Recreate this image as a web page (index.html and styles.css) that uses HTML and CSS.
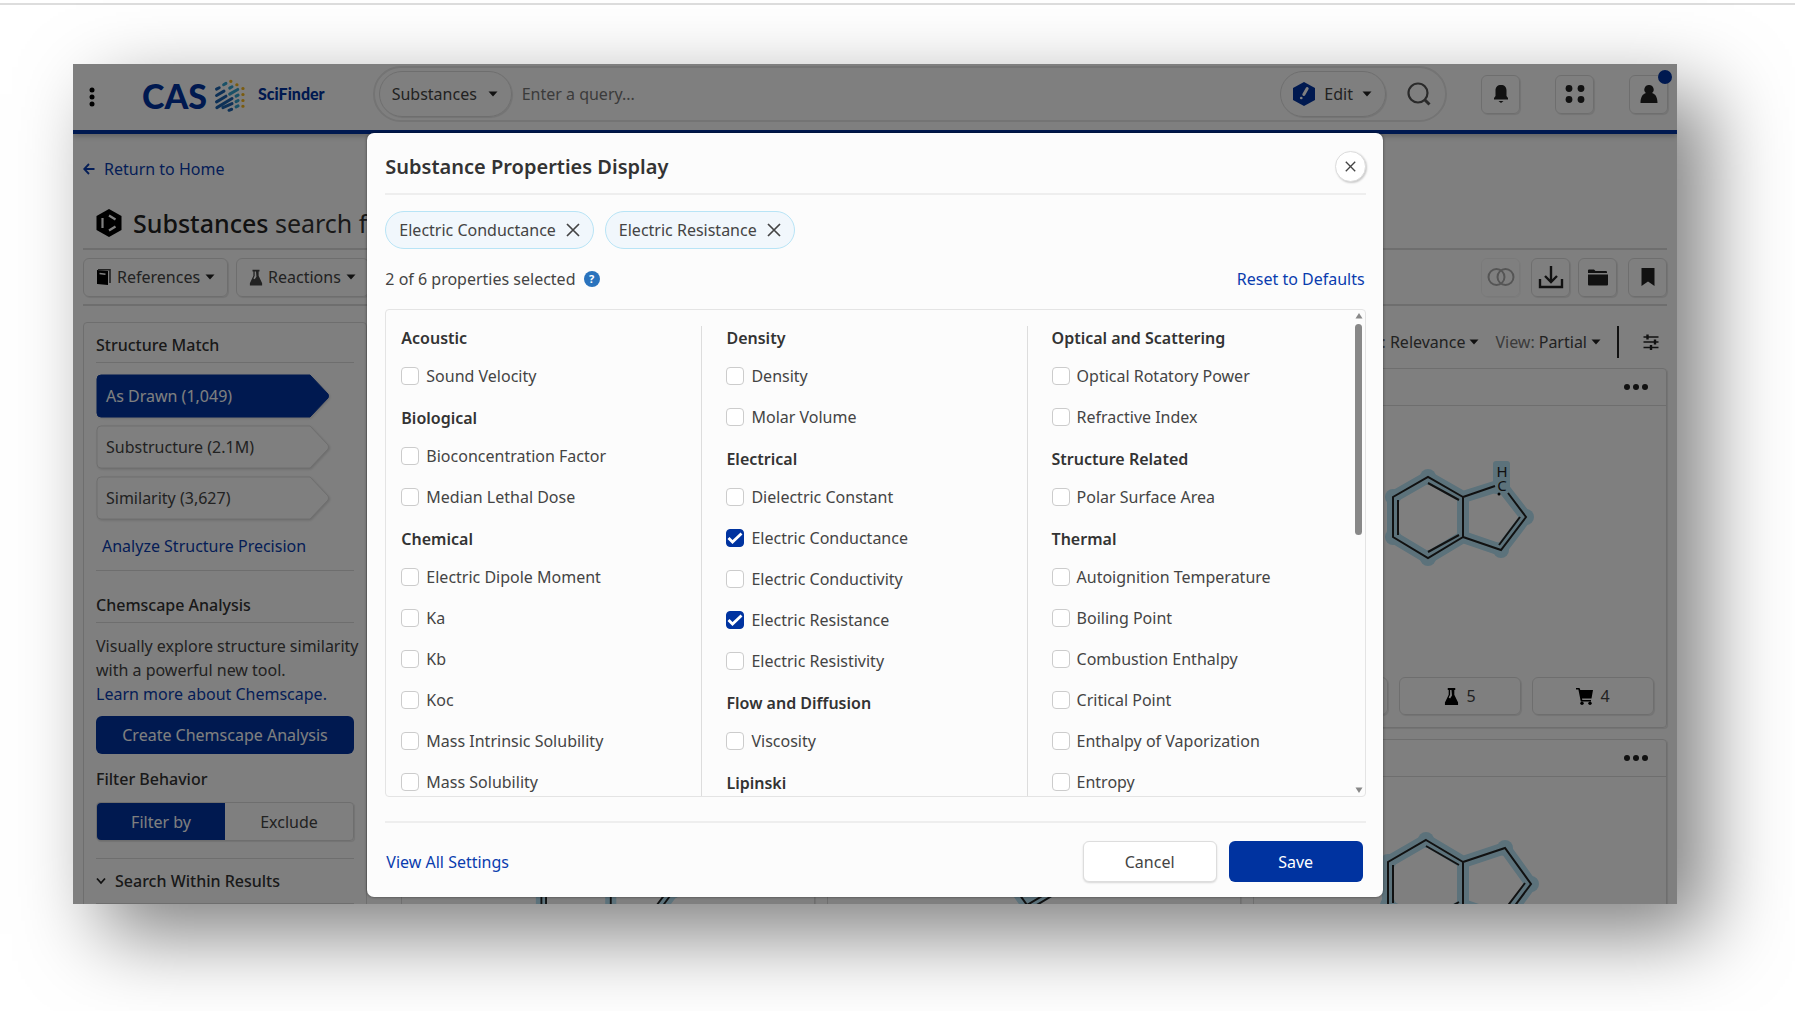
FILE: index.html
```
<!DOCTYPE html>
<html lang="en">
<head>
  <meta charset="UTF-8" />
  <title>CAS SciFinder - Substances</title>
  <link rel="stylesheet" href="styles.css">
</head>
<body>
  <!-- shared symbols -->
  <svg class="symbols" aria-hidden="true">
    <symbol id="caret" viewBox="0 0 10 6"><path d="M0.5 0.5h9L5 5.5z" fill="currentColor"/></symbol>
    <symbol id="flask" viewBox="0 0 16 18">
      <path d="M4 0h8v2h-1v5l4 8.500V18H1v-2.500L5 7V2H4z" fill="currentColor"/>
      <path d="M6.500 2h1.500l.5 6-2 3-1.500-1 1.500-3z" fill="#fff"/>
    </symbol>
    <symbol id="close" viewBox="0 0 14 14"><path d="M1 1l12 12M13 1L1 13" stroke="currentColor" stroke-width="1.700" fill="none"/></symbol>
    <symbol id="more" viewBox="0 0 26 8"><g fill="currentColor"><circle cx="4" cy="4" r="3"/><circle cx="13" cy="4" r="3"/><circle cx="22" cy="4" r="3"/></g></symbol>
    <symbol id="indene" viewBox="1379 831 160 110">
      <g class="glow"><path d="M1425 841L1462 863V906L1425 928L1387 906V863ZM1462 863L1504 849L1530 885L1504 920L1462 906"/></g>
      <g class="dots"><circle cx="1425" cy="841" r="8"/><circle cx="1425" cy="928" r="8"/><circle cx="1387" cy="863" r="8"/><circle cx="1387" cy="906" r="8"/><circle cx="1504" cy="849" r="8"/><circle cx="1530" cy="885" r="8"/></g>
      <g class="bonds"><path d="M1425 841L1462 863V906L1425 928L1387 906V863ZM1462 863L1504 849L1530 885L1504 920L1462 906M1425 847L1458 866M1392 866V904M1425 922L1458 903M1524 884L1502 913"/></g>
    </symbol>
  </svg>

  <hr class="top-rule">

  <div class="app">
    <header class="header">
      <button class="menu-btn" aria-label="Main menu">
        <svg width="8" height="20" viewBox="0 0 8 20"><circle cx="4" cy="3" r="2.500"/><circle cx="4" cy="10" r="2.500"/><circle cx="4" cy="17" r="2.500"/></svg>
      </button>
      <a class="logo" href="#">
        <span class="logo-cas">CAS</span>
        <svg width="34" height="37" viewBox="455 85 100 110" fill="none" stroke-width="9" stroke-linecap="round">
          <path stroke="#1c63ae" d="M465 121L473 117M465 140L487 127M465 159L493 142M466 176L511 149M484 176L511 164M502 184L510 181"/>
          <path stroke="#35a3cf" d="M486 108L493 104M504 118L511 114M504 136L528 122M523 142L529 139M523 158L529 155M523 174L529 171"/>
          <path stroke="#f5b71f" d="M507 98h1M525 108h1M543 119h1M543 137h1M543 155h1M543 172h1"/>
        </svg>
        <span class="logo-name">SciFinder</span>
      </a>
      <div class="search">
        <div class="search-type pill">
          <select aria-label="Search type"><option>Substances</option></select>
          <svg class="caret"><use href="#caret"/></svg>
        </div>
        <input class="query" type="text" placeholder="Enter a query..." aria-label="Query">
        <button class="pill edit-btn">
          <svg width="22" height="24" viewBox="0 0 22 24"><path d="M11 0l11 6v12l-11 6L0 18V6z" fill="#0033a0"/><path d="M14.200 6.500l-3.400 6" stroke="#fff" stroke-width="3" stroke-linecap="round"/><path d="M8.200 16h.1" stroke="#fff" stroke-width="2.600" stroke-linecap="round"/></svg>
          Edit
          <svg class="caret"><use href="#caret"/></svg>
        </button>
        <button class="search-btn" aria-label="Search">
          <svg width="24" height="24" viewBox="0 0 24 24" fill="none" stroke="#555" stroke-width="2.200"><circle cx="11" cy="11" r="9.500"/><path d="M17.500 17.500l5 5" stroke-width="3"/></svg>
        </button>
      </div>
      <div class="header-actions">
        <button class="icon-btn" aria-label="Notifications">
          <svg width="16" height="20" viewBox="0 0 16 20"><path d="M8 1c3.500 0 5.500 2 5.500 5.500V12l1.500 2v1.500H1V14l1.500-2V6.500C2.500 3 4.500 1 8 1zM5.500 17h5L8 19z"/></svg>
        </button>
        <button class="icon-btn" aria-label="Apps">
          <svg width="20" height="20" viewBox="0 0 20 20"><circle cx="4" cy="4.500" r="3.400"/><circle cx="16" cy="4.500" r="3.400"/><circle cx="4" cy="15.500" r="3.400"/><circle cx="16" cy="15.500" r="3.400"/></svg>
        </button>
        <button class="icon-btn" aria-label="Account">
          <svg width="18" height="20" viewBox="0 0 18 20"><path d="M9 1a4.500 4.500 0 0 1 3 8c3.500.8 5.500 4.500 5.500 10H.5C.5 13.500 2.500 9.800 6 9a4.500 4.500 0 0 1 3-8z"/></svg>
          <span class="badge"></span>
        </button>
      </div>
    </header>

    <div class="content">
      <a class="back" href="#">
        <svg width="12" height="12" viewBox="0 0 12 12" fill="none" stroke="currentColor" stroke-width="1.900"><path d="M11.500 6H1.500M6 1L1.200 6 6 11"/></svg>
        Return to Home
      </a>
      <h1 class="title">
        <svg width="26" height="28" viewBox="0 0 26 28"><path d="M13 0l12.500 7v14L13 28 .5 21V7z"/><g stroke="#fff" stroke-width="2.200" fill="none"><path d="M6.500 9v10M13 6.500l6.500 4M13 21.500l6.500-4"/></g></svg>
        <span><b>Substances</b> search for</span>
      </h1>

      <div class="toolbar">
        <button class="tool-btn">
          <svg width="16" height="17" viewBox="0 0 16 17"><path d="M1 1l11 1v14L1 15z"/><path d="M3.500 4.500l6 .8" stroke="#fff" stroke-width="1.500"/><path d="M2 .6h12v13.500" fill="none" stroke="currentColor" stroke-width="1.600"/></svg>
          References
          <svg class="caret"><use href="#caret"/></svg>
        </button>
        <button class="tool-btn">
          <svg width="14" height="17"><use href="#flask"/></svg>
          Reactions
          <svg class="caret"><use href="#caret"/></svg>
        </button>
        <div class="toolbar-right">
          <button class="icon-btn wide-gap" aria-label="Combine" disabled>
            <svg width="28" height="18" viewBox="0 0 28 18" fill="none" stroke="#111" stroke-width="2"><circle cx="9.500" cy="9" r="8"/><circle cx="18.500" cy="9" r="8"/></svg>
          </button>
          <button class="icon-btn" aria-label="Download">
            <svg width="26" height="24" viewBox="0 0 26 24" fill="none" stroke="currentColor" stroke-width="2.400"><path d="M13 1v15M7 11l6 6 6-6M2 14v8h22v-8"/></svg>
          </button>
          <button class="icon-btn wide-gap" aria-label="Save to folder">
            <svg width="20" height="17" viewBox="0 0 20 17"><path d="M0 1.500A1 1 0 0 1 1 .5h5l1.500 1.500H18a1 1 0 0 1 1 1v1H0zM0 5.500h20V15.500a1 1 0 0 1-1 1H1a1 1 0 0 1-1-1z"/></svg>
          </button>
          <button class="icon-btn" aria-label="Bookmark">
            <svg width="14" height="18" viewBox="0 0 14 18"><path d="M.5 0h13v18L7 13.500.5 18z"/></svg>
          </button>
        </div>
      </div>

      <div class="columns">
        <aside class="sidebar">
          <h2>Structure Match</h2>
          <button class="match active">
            <svg viewBox="0 0 234 44" preserveAspectRatio="none"><path d="M5 1H214L232 20Q233 22 232 24L214 43H5Q1 43 1 39V5Q1 1 5 1Z"/></svg>
            <span>As Drawn (1,049)</span>
          </button>
          <button class="match">
            <svg viewBox="0 0 234 44" preserveAspectRatio="none"><path d="M5 1H214L232 20Q233 22 232 24L214 43H5Q1 43 1 39V5Q1 1 5 1Z"/></svg>
            <span>Substructure (2.1M)</span>
          </button>
          <button class="match">
            <svg viewBox="0 0 234 44" preserveAspectRatio="none"><path d="M5 1H214L232 20Q233 22 232 24L214 43H5Q1 43 1 39V5Q1 1 5 1Z"/></svg>
            <span>Similarity (3,627)</span>
          </button>
          <a class="analyze" href="#">Analyze Structure Precision</a>

          <h2>Chemscape Analysis</h2>
          <p>Visually explore structure similarity<br>with a powerful new tool.<br><a href="#">Learn more about Chemscape.</a></p>
          <button class="primary create">Create Chemscape Analysis</button>

          <h3>Filter Behavior</h3>
          <div class="toggle">
            <button class="on">Filter by</button>
            <button>Exclude</button>
          </div>
          <div class="facet">
            <svg width="10" height="8" viewBox="0 0 10 8" fill="none" stroke="#222" stroke-width="1.800"><path d="M1 1.500L5 6l4-4.500"/></svg>
            Search Within Results
          </div>
        </aside>

        <main class="results">
          <div class="sort-row">
            <button><span class="muted">Sort:</span> Relevance <svg class="caret"><use href="#caret"/></svg></button>
            <button><span class="muted">View:</span> Partial <svg class="caret"><use href="#caret"/></svg></button>
            <span class="divider"></span>
            <button aria-label="Display options">
              <svg width="16" height="16" viewBox="0 0 16 16" fill="none" stroke="#222" stroke-width="1.500"><path d="M.5 3h15M.5 8h15M.5 13.500h15"/><path d="M4.500.5v5M12 5.500v5M8 11v5" stroke-width="2.400"/></svg>
            </button>
          </div>
          <div class="cards">
            <article class="card"></article>
            <article class="card"></article>
            <article class="card">
              <div class="card-head"><button aria-label="More"><svg width="26" height="8"><use href="#more"/></svg></button></div>
              <div class="card-body">
                <svg width="150" height="110" viewBox="1384 459 150 110">
                  <g class="glow"><path d="M1427 477L1462 497V537L1427 558L1392 537V497ZM1462 497L1500 485L1525 517L1500 550L1462 537"/></g>
                  <g class="dots"><circle cx="1427" cy="477" r="8"/><circle cx="1427" cy="558" r="8"/><circle cx="1392" cy="497" r="8"/><circle cx="1392" cy="537" r="8"/><circle cx="1525" cy="517" r="8"/><circle cx="1500" cy="550" r="8"/><rect x="1492" y="461" width="17" height="33" rx="3"/></g>
                  <g class="bonds"><path d="M1494 486L1462 497V537L1427 558L1392 537V497L1427 477L1462 497M1507 493L1525 517L1500 550L1462 537M1427 483L1458 500M1397 500V535M1427 552L1458 535M1519 517L1498 545"/></g>
                  <text x="1501" y="477">H</text><text x="1501" y="491">C</text>
                  <circle cx="1498" cy="494" r="1.500"/>
                </svg>
              </div>
              <div class="card-foot">
                <button></button>
                <button><svg width="15" height="17"><use href="#flask"/></svg> 5</button>
                <button><svg width="17" height="17" viewBox="0 0 17 17"><path d="M0 0h3.500l.8 2H17l-1.500 8.500H6l.3 1.500H15v1.500H4.800L2.400 1.500H0z"/><circle cx="6" cy="15.300" r="1.700"/><circle cx="14" cy="15.300" r="1.700"/></svg> 4</button>
              </div>
            </article>
            <article class="card">
              <div class="card-head"></div>
              <div class="card-body low"><svg width="148" height="102"><use href="#indene"/></svg></div>
            </article>
            <article class="card">
              <div class="card-head"></div>
              <div class="card-body">
                <svg width="160" height="110" viewBox="0 0 160 110">
                  <g class="glow"><path d="M58 54L73 75L100 59"/></g>
                  <g class="bonds"><path d="M58 54L73 75L100 59M81 76L101 64"/></g>
                </svg>
              </div>
            </article>
            <article class="card">
              <div class="card-head"><button aria-label="More"><svg width="26" height="8"><use href="#more"/></svg></button></div>
              <div class="card-body"><svg width="160" height="110"><use href="#indene"/></svg></div>
            </article>
          </div>
        </main>
      </div>
    </div>

    <div class="overlay">
      <section class="modal" role="dialog" aria-labelledby="modal-title">
        <div class="modal-head">
          <h2 id="modal-title">Substance Properties Display</h2>
          <button class="close-btn" aria-label="Close"><svg width="11" height="11"><use href="#close"/></svg></button>
        </div>
        <div class="chips">
          <span class="chip">Electric Conductance <button aria-label="Remove Electric Conductance"><svg width="14" height="14"><use href="#close"/></svg></button></span>
          <span class="chip">Electric Resistance <button aria-label="Remove Electric Resistance"><svg width="14" height="14"><use href="#close"/></svg></button></span>
        </div>
        <div class="count">
          <span>2 of 6 properties selected</span>
          <button class="help" aria-label="Help">?</button>
          <a href="#">Reset to Defaults</a>
        </div>
        <div class="list">
          <div class="list-cols">
            <div class="col">
              <fieldset>
                <legend>Acoustic</legend>
                <label><input type="checkbox"> Sound Velocity</label>
              </fieldset>
              <fieldset>
                <legend>Biological</legend>
                <label><input type="checkbox"> Bioconcentration Factor</label>
                <label><input type="checkbox"> Median Lethal Dose</label>
              </fieldset>
              <fieldset>
                <legend>Chemical</legend>
                <label><input type="checkbox"> Electric Dipole Moment</label>
                <label><input type="checkbox"> Ka</label>
                <label><input type="checkbox"> Kb</label>
                <label><input type="checkbox"> Koc</label>
                <label><input type="checkbox"> Mass Intrinsic Solubility</label>
                <label><input type="checkbox"> Mass Solubility</label>
              </fieldset>
            </div>
            <div class="col">
              <fieldset>
                <legend>Density</legend>
                <label><input type="checkbox"> Density</label>
                <label><input type="checkbox"> Molar Volume</label>
              </fieldset>
              <fieldset>
                <legend>Electrical</legend>
                <label><input type="checkbox"> Dielectric Constant</label>
                <label><input type="checkbox" checked> Electric Conductance</label>
                <label><input type="checkbox"> Electric Conductivity</label>
                <label><input type="checkbox" checked> Electric Resistance</label>
                <label><input type="checkbox"> Electric Resistivity</label>
              </fieldset>
              <fieldset>
                <legend>Flow and Diffusion</legend>
                <label><input type="checkbox"> Viscosity</label>
              </fieldset>
              <fieldset>
                <legend>Lipinski</legend>
              </fieldset>
            </div>
            <div class="col">
              <fieldset>
                <legend>Optical and Scattering</legend>
                <label><input type="checkbox"> Optical Rotatory Power</label>
                <label><input type="checkbox"> Refractive Index</label>
              </fieldset>
              <fieldset>
                <legend>Structure Related</legend>
                <label><input type="checkbox"> Polar Surface Area</label>
              </fieldset>
              <fieldset>
                <legend>Thermal</legend>
                <label><input type="checkbox"> Autoignition Temperature</label>
                <label><input type="checkbox"> Boiling Point</label>
                <label><input type="checkbox"> Combustion Enthalpy</label>
                <label><input type="checkbox"> Critical Point</label>
                <label><input type="checkbox"> Enthalpy of Vaporization</label>
                <label><input type="checkbox"> Entropy</label>
              </fieldset>
            </div>
          </div>
          <div class="scrollbar">
            <svg width="8" height="6" viewBox="0 0 8 6"><path d="M4 0l3.500 5.500h-7z"/></svg>
            <div class="track"><div class="thumb"></div></div>
            <svg width="8" height="6" viewBox="0 0 8 6"><path d="M4 6L.5.5h7z"/></svg>
          </div>
        </div>
        <div class="modal-foot">
          <a href="#">View All Settings</a>
          <button class="secondary">Cancel</button>
          <button class="primary">Save</button>
        </div>
      </section>
    </div>
  </div>
</body>
</html>
```

FILE: styles.css
```
* {
  box-sizing: border-box;
}

body {
  margin: 0;
  height: 100vh;
  display: flex;
  flex-direction: column;
  overflow: hidden;
  background: #fff;
  font-family: "Noto Sans", sans-serif;
  font-size: 16px;
  line-height: 24px;
  color: #444;
}

button, input, select {
  font: inherit;
  color: inherit;
}

button {
  display: flex;
  align-items: center;
  justify-content: center;
  padding: 0;
  border: none;
  background: none;
  cursor: pointer;
}

a {
  color: #0a3cae;
  text-decoration: none;
}

svg {
  flex: none;
}

h1, h2, h3, p {
  margin: 0;
}

h1, h2, h3 {
  color: #333;
}

.symbols {
  position: absolute;
  width: 0;
  height: 0;
}

.caret {
  width: 10px;
  height: 6px;
  color: #222;
}

.top-rule {
  width: 100%;
  height: 2px;
  margin: 3px 0 59px;
  border: none;
  background: #ddd;
}

.app {
  position: relative;
  flex: 1;
  min-height: 0;
  margin: 0 118px 107px 73px;
  display: flex;
  flex-direction: column;
  overflow: hidden;
  background: #fff;
  box-shadow: 30px 30px 75px rgba(0,0,0,0.5);
}

/* Header */
.header {
  flex: none;
  display: flex;
  align-items: center;
  height: 70px;
  padding: 0 9px 6px 15px;
  border-bottom: 4px solid #0033a0;
  box-shadow: 0 2px 6px rgba(0,0,0,0.25);
}

.menu-btn {
  margin-right: 46px;
  padding-top: 5px;
}

.logo {
  display: flex;
  align-items: center;
  color: #0033a0;
  font-family: Lato, sans-serif;
  font-weight: 900;
}

.logo-cas {
  font-size: 34px;
  margin-right: 6px;
  padding-top: 4px;
}

.logo svg {
  margin-top: 3px;
}

.logo-name {
  font-size: 16px;
  font-weight: 900;
  margin-left: 11px;
}

.search {
  flex: 1;
  display: flex;
  align-items: center;
  height: 56px;
  margin: 0 34px 0 48px;
  padding: 0 14px 0 4px;
  border: 2px solid #e8e8e8;
  border-radius: 28px;
}

.pill {
  display: flex;
  align-items: center;
  height: 46px;
  padding: 0 13px 0 12px;
  border: 1px solid #ddd;
  border-radius: 23px;
  box-shadow: 1px 1px 1px rgba(0,0,0,0.1);
}

.search-type select {
  appearance: none;
  border: none;
  background: none;
  margin-right: 10px;
  padding: 0;
}

.query {
  flex: 1;
  min-width: 0;
  margin: 0 10px;
  padding: 0;
  border: none;
  background: none;
}

.query::placeholder {
  color: #777;
  opacity: 1;
}

.edit-btn {
  gap: 9px;
}

.search-btn {
  margin-left: 21px;
}

.header-actions {
  display: flex;
  gap: 35px;
}

.icon-btn {
  position: relative;
  width: 39px;
  height: 39px;
  border: 1px solid #ddd;
  border-radius: 6px;
  box-shadow: 1px 1px 1px rgba(0,0,0,0.1);
}

.icon-btn svg {
  color: #222;
  fill: #222;
}

.icon-btn svg[fill="none"] {
  fill: none;
}

.icon-btn:disabled {
  opacity: 0.35;
}

.badge {
  position: absolute;
  top: -6px;
  right: -5px;
  width: 14px;
  height: 14px;
  border-radius: 7px;
  background: #0033a0;
}

/* Page content */
.content {
  flex: none;
  padding: 23px 10px 0;
}

.back {
  display: flex;
  align-items: center;
  gap: 9px;
}

.title {
  display: flex;
  align-items: center;
  gap: 11px;
  height: 69px;
  padding: 16px 0 0 13px;
  border-bottom: 2px solid #ddd;
  font-size: 25px;
  font-weight: 400;
}

.title b {
  font-weight: 500;
  color: #222;
}

.toolbar {
  display: flex;
  align-items: center;
  gap: 8px;
  height: 56px;
  border-bottom: 2px solid #ddd;
}

.tool-btn {
  height: 39px;
  gap: 5px;
  padding: 0 12px;
  border: 1px solid #ddd;
  border-radius: 6px;
  box-shadow: 1px 1px 1px rgba(0,0,0,0.1);
}

.toolbar-right {
  display: flex;
  gap: 8px;
  margin-left: auto;
}

.wide-gap {
  margin-right: 3px;
}

.columns {
  display: flex;
  gap: 34px;
}

/* Sidebar */
.sidebar {
  flex: none;
  width: 284px;
  margin-top: 16px;
  padding: 10px 12px;
  border: 1px solid #ddd;
  border-radius: 4px;
}

.sidebar h2, .sidebar h3 {
  font-size: 16px;
  font-weight: 500;
}

.sidebar h2 {
  padding-bottom: 5px;
  border-bottom: 1px solid #ddd;
  margin-bottom: 11px;
}

.sidebar p {
  white-space: nowrap;
}

.match {
  position: relative;
  width: 234px;
  height: 44px;
  margin-bottom: 7px;
  padding-left: 10px;
  justify-content: flex-start;
}

.match svg {
  position: absolute;
  inset: 0;
  width: 100%;
  height: 100%;
  fill: #fff;
  stroke: #ddd;
  filter: drop-shadow(1px 1px 1px rgba(0,0,0,0.15));
}

.match span {
  position: relative;
}

.match.active {
  color: #fff;
}

.match.active svg {
  fill: #0033a0;
  stroke: #0033a0;
}

.analyze {
  display: block;
  padding: 7px 6px 12px;
  margin-bottom: 22px;
  border-bottom: 1px solid #ddd;
}

.primary, .secondary {
  height: 41px;
  border-radius: 6px;
}

.primary {
  background: #0033a0;
  color: #fff;
}

.secondary {
  background: #fff;
  border: 1px solid #ddd;
  box-shadow: 0 1px 2px rgba(0,0,0,0.15);
}

.create {
  width: 100%;
  height: 38px;
  margin: 10px 0 13px;
}

.toggle {
  display: flex;
  height: 39px;
  margin: 11px 0 17px;
  border: 1px solid #ddd;
  border-radius: 4px;
  box-shadow: 1px 1px 1px rgba(0,0,0,0.1);
}

.toggle button {
  flex: 1;
}

.toggle .on {
  background: #0033a0;
  color: #fff;
  border-radius: 4px 0 0 4px;
}

.facet {
  display: flex;
  align-items: center;
  gap: 9px;
  padding: 10px 0;
  border-top: 1px solid #ddd;
  border-bottom: 1px solid #ddd;
  color: #333;
  font-weight: 500;
}

/* Results */
.results {
  flex: 1;
  min-width: 0;
}

.sort-row {
  display: flex;
  align-items: center;
  justify-content: flex-end;
  gap: 16px;
  height: 62px;
  padding: 10px 8px 0 0;
}

.sort-row button {
  gap: 4px;
}

.sort-row .muted {
  color: #777;
}

.divider {
  width: 2px;
  height: 32px;
  margin-right: 8px;
  background: #222;
}

.cards {
  display: grid;
  grid-template-columns: repeat(3, 1fr);
  gap: 11px 12px;
}

.card {
  border: 1px solid #ddd;
  border-radius: 4px;
  box-shadow: 1px 1px 1px rgba(0,0,0,0.1);
}

.card-head {
  display: flex;
  align-items: center;
  justify-content: flex-end;
  height: 37px;
  padding-right: 17px;
  border-bottom: 1px solid #ddd;
  color: #222;
}

.card-body {
  display: flex;
  justify-content: center;
  height: 271px;
  padding-top: 53px;
}

.card-body.low {
  padding-top: 64px;
}

.card-body text {
  font-size: 15px;
  text-anchor: middle;
  fill: #222;
}

.glow {
  fill: none;
  stroke: #b8e4f6;
  stroke-width: 12px;
  stroke-linejoin: round;
}

.dots {
  fill: #b8e4f6;
}

.bonds {
  fill: none;
  stroke: #222;
  stroke-width: 2px;
}

.card-foot {
  display: grid;
  grid-template-columns: repeat(3, 1fr);
  gap: 11px;
  padding: 0 12px 12px;
}

.card-foot button {
  height: 38px;
  gap: 7px;
  border: 1px solid #ddd;
  border-radius: 6px;
  box-shadow: 1px 1px 1px rgba(0,0,0,0.1);
}

.card-foot svg {
  color: #000;
}

/* Modal */
.overlay {
  position: absolute;
  inset: 0;
  display: flex;
  justify-content: center;
  padding: 69px 0 7px;
  background: rgba(0,0,0,0.5);
}

.modal {
  width: 63.3%;
  display: flex;
  flex-direction: column;
  padding: 0 17px 15px 18px;
  border-radius: 7px;
  background: #fcfcfc;
  box-shadow: 0 0 3px rgba(0,0,0,0.5);
}

.modal-head {
  flex: none;
  display: flex;
  align-items: center;
  justify-content: space-between;
  height: 62px;
  padding-top: 7px;
  border-bottom: 2px solid #eee;
}

.modal-head h2 {
  font-size: 20px;
  font-weight: 600;
}

.close-btn {
  width: 31px;
  height: 31px;
  border: 1px solid #ddd;
  border-radius: 50%;
  background: #fff;
  box-shadow: 1px 1px 2px rgba(0,0,0,0.2);
}

.chips {
  display: flex;
  gap: 11px;
  padding-top: 16px;
}

.chip {
  display: flex;
  align-items: center;
  gap: 10px;
  height: 38px;
  padding: 0 13px;
  border: 1px solid #b8e4f6;
  border-radius: 19px;
  background: #f1f7fc;
}

.count {
  display: flex;
  align-items: center;
  padding: 18px 1px 18px 0;
}

.count a {
  margin-left: auto;
}

.help {
  width: 16px;
  height: 16px;
  margin-left: 8px;
  border-radius: 50%;
  background: #2a73bd;
  color: #fff;
  font-size: 11px;
  font-weight: 700;
}

.list {
  flex: 1;
  min-height: 0;
  display: flex;
  border: 1px solid #e4e4e4;
  border-radius: 4px;
  overflow: hidden;
}

.list-cols {
  flex: 1;
  display: grid;
  grid-template-columns: repeat(3, 1fr);
  gap: 24px;
  padding: 16px 0 0 15px;
}

.col {
  border-right: 1px solid #ddd;
}

.col:last-child {
  border-right: none;
}

fieldset {
  min-width: 0;
  margin: 0 0 10px;
  padding: 0;
  border: none;
}

legend {
  padding: 0 0 5px;
  color: #333;
  font-weight: 600;
}

.col label {
  display: flex;
  align-items: center;
  gap: 7px;
  height: 41px;
}

input[type="checkbox"] {
  appearance: none;
  width: 18px;
  height: 18px;
  margin: 0;
  border: 1px solid #ccc;
  border-radius: 4px;
  background: #fff;
}

input[type="checkbox"]:checked {
  border-color: #0033a0;
  background: #0033a0 url("data:image/svg+xml,%3Csvg xmlns='http://www.w3.org/2000/svg' viewBox='0 0 16 16'%3E%3Cpath d='M1.500 8l4 4 9-8.500' fill='none' stroke='white' stroke-width='2.800'/%3E%3C/svg%3E");
}

.scrollbar {
  display: flex;
  flex-direction: column;
  align-items: center;
  gap: 5px;
  width: 12px;
  padding: 3px 0;
  fill: #888;
}

.track {
  flex: 1;
  width: 7px;
}

.thumb {
  height: 46%;
  border-radius: 4px;
  background: #888;
}

.modal-foot {
  flex: none;
  display: flex;
  align-items: center;
  gap: 12px;
  margin-top: 24px;
  padding: 18px 3px 0 1px;
  border-top: 2px solid #eee;
}

.modal-foot a {
  margin-right: auto;
}

.modal-foot button {
  width: 134px;
}
```
